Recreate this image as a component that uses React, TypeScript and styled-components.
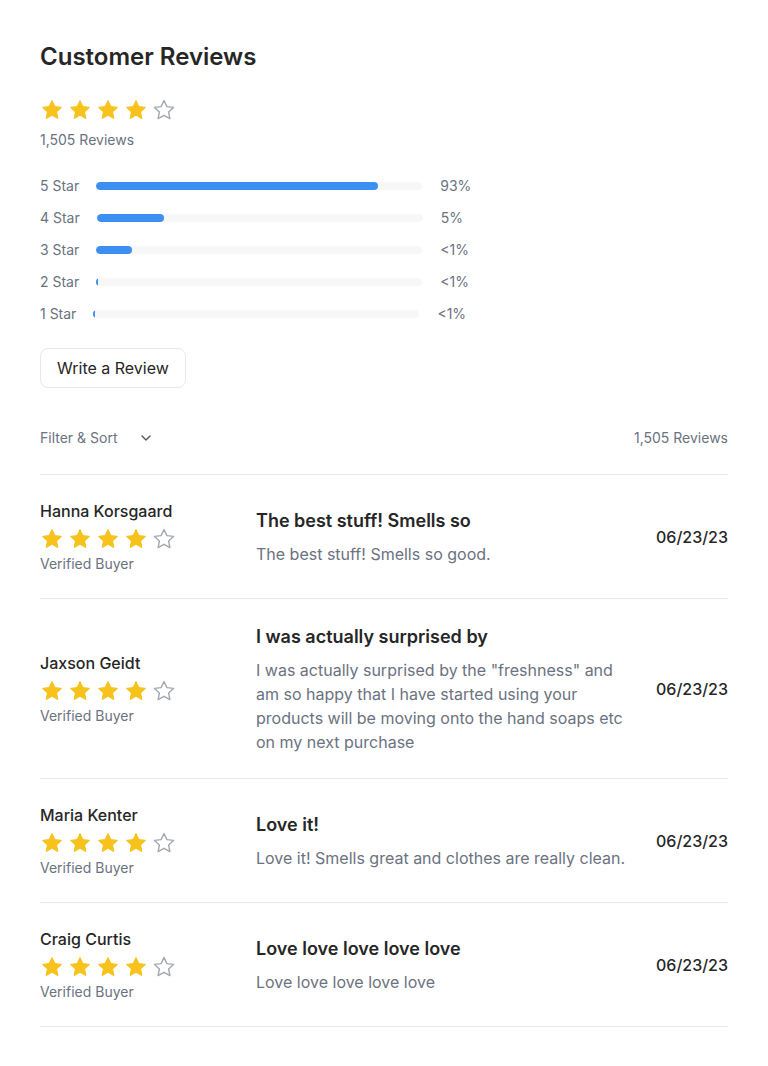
import styled, { createGlobalStyle } from "styled-components";
import { ChevronDown } from "lucide-react";

interface IBar {
  label: string;
  fill: number;
  percent: string;
}

interface IReview {
  name: string;
  rating: number;
  title: string;
  body: string;
  date: string;
}

const bars: IBar[] = [
  { label: "5 Star", fill: 282, percent: "93%" },
  { label: "4 Star", fill: 67, percent: "5%" },
  { label: "3 Star", fill: 36, percent: "<1%" },
  { label: "2 Star", fill: 2, percent: "<1%" },
  { label: "1 Star", fill: 2, percent: "<1%" },
];

const reviews: IReview[] = [
  {
    name: "Hanna Korsgaard",
    rating: 4,
    title: "The best stuff! Smells so",
    body: "The best stuff! Smells so good.",
    date: "06/23/23",
  },
  {
    name: "Jaxson Geidt",
    rating: 4,
    title: "I was actually surprised by",
    body: 'I was actually surprised by the "freshness" and am so happy that I have started using your products will be moving onto the hand soaps etc on my next purchase',
    date: "06/23/23",
  },
  {
    name: "Maria Kenter",
    rating: 4,
    title: "Love it!",
    body: "Love it! Smells great and clothes are really clean.",
    date: "06/23/23",
  },
  {
    name: "Craig Curtis",
    rating: 4,
    title: "Love love love love love",
    body: "Love love love love love",
    date: "06/23/23",
  },
];

const GlobalStyle = createGlobalStyle`
  body {
    margin: 0;
    background: #ffffff;
    font-family: Inter, "Noto Sans", sans-serif;
    color: #262626;
  }
`;

const Page = styled.div`
  padding: 41px 40px 40px;
`;

const Title = styled.h2`
  margin: 0;
  font-size: 24px;
  line-height: 32px;
  font-weight: 600;
  color: #262626;
`;

const StarsRow = styled.div<{ top?: number }>`
  display: flex;
  gap: 4px;
  margin-top: ${({ top }) => top ?? 0}px;

  svg {
    display: block;
  }
`;

const Muted = styled.div`
  font-size: 14px;
  line-height: 20px;
  color: #6b7280;
`;

const Count = styled(Muted)`
  margin-top: 8px;
`;

const Bars = styled.div`
  display: flex;
  flex-direction: column;
  gap: 12px;
  margin-top: 26px;
`;

const BarRow = styled.div`
  display: flex;
  align-items: center;
  font-size: 14px;
  line-height: 20px;
  color: #6b7280;
`;

const BarLabel = styled.span`
  margin-right: 17px;
`;

const Track = styled.div`
  width: 326px;
  height: 8px;
  border-radius: 4px;
  background: #f7f7f8;
  margin-right: 18px;
  overflow: hidden;
`;

const Fill = styled.div`
  height: 100%;
  border-radius: 4px;
  background: #3d8ff2;
`;

const Button = styled.button`
  margin-top: 24px;
  height: 40px;
  padding: 0 16px;
  border: 1px solid #e5e7eb;
  border-radius: 8px;
  background: #ffffff;
  font-family: inherit;
  font-size: 16px;
  color: #262626;
`;

const FilterBar = styled.div`
  display: flex;
  align-items: center;
  justify-content: space-between;
  margin-top: 40px;
  padding-bottom: 26px;
  border-bottom: 1px solid #e5e7eb;
`;

const FilterToggle = styled.div`
  display: flex;
  align-items: center;
  gap: 21px;
  font-size: 14px;
  line-height: 20px;
  color: #6b7280;

  svg {
    color: #4b5563;
  }
`;

const ReviewRow = styled.div`
  display: flex;
  align-items: center;
  padding: 25px 0 24px;
  border-bottom: 1px solid #e5e7eb;
`;

const Author = styled.div`
  width: 216px;
  flex-shrink: 0;
`;

const Name = styled.div`
  font-size: 16px;
  line-height: 22px;
  font-weight: 500;
  color: #262626;
`;

const AuthorStars = styled(StarsRow)`
  margin: 5px 0 3px;
`;

const Content = styled.div`
  width: 380px;
`;

const ReviewTitle = styled.div`
  font-size: 18px;
  line-height: 26px;
  font-weight: 600;
  color: #262626;
`;

const ReviewBody = styled.p`
  margin: 8px 0 0;
  font-size: 16px;
  line-height: 24px;
  color: #6b7280;
`;

const DateText = styled.div`
  margin-left: auto;
  font-size: 16px;
  line-height: 24px;
  font-weight: 500;
  color: #262626;
`;

const Star = ({ filled }: { filled: boolean }) => (
  <svg width="24" height="24" viewBox="0 0 24 24">
    <path
      d="M12 2.5l2.9 6.1 6.6.8-4.9 4.6 1.3 6.6L12 17.3l-5.9 3.3 1.3-6.6-4.9-4.6 6.6-.8z"
      fill={filled ? "#f7c21b" : "none"}
      stroke={filled ? "#f7c21b" : "#a3a8b0"}
      strokeWidth={filled ? 1 : 1.4}
      strokeLinejoin="round"
    />
  </svg>
);

const Stars = ({ rating }: { rating: number }) => (
  <>
    {[0, 1, 2, 3, 4].map((i) => (
      <Star key={i} filled={i < rating} />
    ))}
  </>
);

export default function App() {
  return (
    <Page>
      <GlobalStyle />
      <Title>Customer Reviews</Title>
      <StarsRow top={25}>
        <Stars rating={4} />
      </StarsRow>
      <Count>1,505 Reviews</Count>

      <Bars>
        {bars.map((bar) => (
          <BarRow key={bar.label}>
            <BarLabel>{bar.label}</BarLabel>
            <Track>
              <Fill style={{ width: `${bar.fill}px` }} />
            </Track>
            <span>{bar.percent}</span>
          </BarRow>
        ))}
      </Bars>

      <Button>Write a Review</Button>

      <FilterBar>
        <FilterToggle>
          Filter &amp; Sort
          <ChevronDown size={16} strokeWidth={2} />
        </FilterToggle>
        <Muted>1,505 Reviews</Muted>
      </FilterBar>

      {reviews.map((review) => (
        <ReviewRow key={review.name}>
          <Author>
            <Name>{review.name}</Name>
            <AuthorStars>
              <Stars rating={review.rating} />
            </AuthorStars>
            <Muted>Verified Buyer</Muted>
          </Author>
          <Content>
            <ReviewTitle>{review.title}</ReviewTitle>
            <ReviewBody>{review.body}</ReviewBody>
          </Content>
          <DateText>{review.date}</DateText>
        </ReviewRow>
      ))}
    </Page>
  );
}
